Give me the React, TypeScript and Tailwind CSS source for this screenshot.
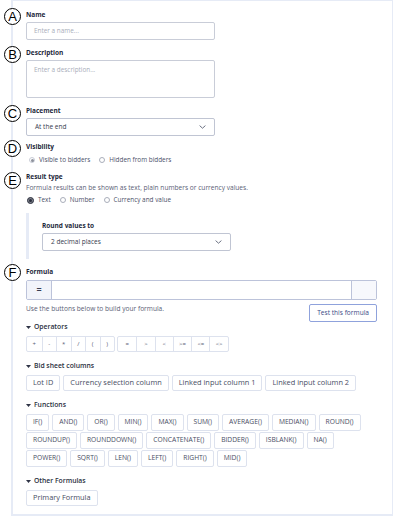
import React from 'react';

const OPS_A = ['+', '-', '*', '/', '(', ')'];
const OPS_B = ['=', '>', '<', '>=', '<=', '<>'];
const BID_COLUMNS = ['Lot ID', 'Currency selection column', 'Linked input column 1', 'Linked input column 2'];
const FUNCTIONS = [
  ['IF()', 'AND()', 'OR()', 'MIN()', 'MAX()', 'SUM()', 'AVERAGE()', 'MEDIAN()', 'ROUND()'],
  ['ROUNDUP()', 'ROUNDDOWN()', 'CONCATENATE()', 'BIDDER()', 'ISBLANK()', 'NA()'],
  ['POWER()', 'SQRT()', 'LEN()', 'LEFT()', 'RIGHT()', 'MID()'],
];

const Marker = ({ letter, top }: { letter: string; top: number }) => (
  <div
    className="absolute left-[-22px] w-[17px] h-[17px] rounded-full border border-black bg-white flex items-center justify-center text-[13px] leading-none text-black font-['Liberation_Sans',sans-serif]"
    style={{ top }}
  >
    {letter}
  </div>
);

const Label = ({ children }: { children: React.ReactNode }) => (
  <p className="text-[6.5px] leading-[8px] font-bold text-[#23283a]">{children}</p>
);

const Chevron = () => (
  <svg width="7" height="4" viewBox="0 0 7 4" className="text-[#5b6275]">
    <path d="M0.6 0.6 L3.5 3.2 L6.4 0.6" fill="none" stroke="currentColor" strokeWidth="0.9" />
  </svg>
);

const Caret = () => (
  <svg width="5" height="3" viewBox="0 0 5 3" className="mr-[3px]">
    <path d="M0 0 H5 L2.5 3 Z" fill="#2f3446" />
  </svg>
);

const Radio = ({ state, label }: { state: 'off' | 'soft' | 'on'; label: string }) => (
  <span className="flex items-center gap-[4px]">
    {state === 'on' ? (
      <span className="w-[7px] h-[7px] rounded-full border-[1.5px] border-[#2b2f3d] bg-[#7d808a] flex items-center justify-center">
        <span className="w-[3px] h-[3px] rounded-full bg-[#2b2f3d]" />
      </span>
    ) : state === 'soft' ? (
      <span className="w-[6px] h-[6px] rounded-full border border-[#c8ccd6] flex items-center justify-center">
        <span className="w-[3px] h-[3px] rounded-full bg-[#8d919c]" />
      </span>
    ) : (
      <span className="w-[6px] h-[6px] rounded-full border border-[#a9aeba]" />
    )}
    <span>{label}</span>
  </span>
);

const Heading = ({ children }: { children: React.ReactNode }) => (
  <div className="flex items-center h-[8px] text-[6.8px] font-semibold text-[#2a2f40]">
    <Caret />
    {children}
  </div>
);

const Chip = ({ children, size = 'fn' }: { children: React.ReactNode; size?: 'fn' | 'big' }) => (
  <span
    className={
      size === 'big'
        ? 'h-[16px] px-[6px] flex items-center border border-[#dde2ee] rounded-[2px] text-[7.4px] text-[#474d63]'
        : 'h-[17px] px-[6px] flex items-center border border-[#dde2ee] rounded-[2px] text-[6.7px] text-[#474d63]'
    }
  >
    {children}
  </span>
);

export default function App() {
  return (
    <div className="w-[393px] h-[517px] bg-white font-['Open_Sans',sans-serif] text-[#4a5068] overflow-hidden">
      <div className="ml-[11px] h-[516px] border-l-2 border-t border-b-2 border-r border-[#e6ebf6] pl-[13px] pt-[10px]">
        {/* Name */}
        <div className="relative">
          <Marker letter="A" top={-3} />
          <Label>Name</Label>
          <div className="mt-[3px] w-[189px] h-[18px] border border-[#c9cdd8] rounded-[2px] flex items-center px-[7px] text-[6.4px] text-[#a8adb9]">
            Enter a name...
          </div>
        </div>

        {/* Description */}
        <div className="relative mt-[9px]">
          <Marker letter="B" top={-3} />
          <Label>Description</Label>
          <div className="mt-[3px] w-[189px] h-[38px] border border-[#c9cdd8] rounded-[2px] px-[7px] pt-[4px] text-[6.4px] text-[#a8adb9]">
            Enter a description...
          </div>
        </div>

        {/* Placement */}
        <div className="relative mt-[9px]">
          <Marker letter="C" top={-2} />
          <Label>Placement</Label>
          <div className="mt-[3px] w-[189px] h-[18px] border border-[#c0c5d3] rounded-[2px] flex items-center justify-between pl-[8px] pr-[8px] text-[6.5px] text-[#363b4d]">
            <span>At the end</span>
            <Chevron />
          </div>
        </div>

        {/* Visibility */}
        <div className="relative mt-[7px]">
          <Marker letter="D" top={-3} />
          <Label>Visibility</Label>
          <div className="mt-[5px] h-[8px] flex items-center gap-[9px] pl-[3px] text-[6.4px] text-[#4a5068]">
            <Radio state="soft" label="Visible to bidders" />
            <Radio state="off" label="Hidden from bidders" />
          </div>
        </div>

        {/* Result type */}
        <div className="relative mt-[9px]">
          <Marker letter="E" top={-1} />
          <Label>Result type</Label>
          <p className="mt-[3px] h-[8px] leading-[8px] text-[6.6px] text-[#5a6076]">
            Formula results can be shown as text, plain numbers or currency values.
          </p>
          <div className="mt-[4px] h-[8px] flex items-center gap-[9px] pl-[1px] text-[6.4px] text-[#4a5068]">
            <Radio state="on" label="Text" />
            <Radio state="off" label="Number" />
            <Radio state="off" label="Currency and value" />
          </div>
          <div className="mt-[9px] border-l-[3px] border-[#e6ebf6] pl-[13px] pt-[9px] pb-[8px]">
            <Label>Round values to</Label>
            <div className="mt-[3px] w-[189px] h-[18px] border border-[#c0c5d3] rounded-[2px] flex items-center justify-between pl-[8px] pr-[8px] text-[6.5px] text-[#363b4d]">
              <span>2 decimal places</span>
              <Chevron />
            </div>
          </div>
        </div>

        {/* Formula */}
        <div className="relative mt-[9px] w-[351px]">
          <Marker letter="F" top={-4} />
          <Label>Formula</Label>
          <div className="mt-[4px] h-[20px] border border-[#bcc3da] rounded-[2px] flex">
            <div className="w-[25px] bg-[#f2f4fa] border-r border-[#bcc3da] flex items-center justify-center text-[9px] font-bold text-[#3a3f52]">
              =
            </div>
            <div className="flex-1" />
            <div className="w-[25px] bg-[#f7f8fc] border-l border-[#bcc3da]" />
          </div>
          <div className="mt-[4px] flex items-start justify-between">
            <p className="pt-[1px] text-[6.6px] leading-[8px] text-[#5a6076]">
              Use the buttons below to build your formula.
            </p>
            <span className="h-[18px] px-[7px] flex items-center border border-[#8fa2dc] rounded-[2px] text-[6.6px] text-[#3b4b86]">
              Test this formula
            </span>
          </div>

          <div className="mt-[1px]">
            <Heading>Operators</Heading>
            <div className="mt-[5px] flex gap-[2px]">
              {[OPS_A, OPS_B].map((group, gi) => (
                <div key={gi} className="flex h-[16px] border border-[#dde2ee] rounded-[2px]">
                  {group.map((op, i) => (
                    <span
                      key={op}
                      className={
                        'flex items-center justify-center text-[6px] text-[#5a6076] ' +
                        (i > 0 ? 'border-l border-[#dde2ee] ' : '') +
                        (gi === 0 ? 'w-[14.5px]' : 'w-[18.3px]')
                      }
                    >
                      {op}
                    </span>
                  ))}
                </div>
              ))}
            </div>
          </div>

          <div className="mt-[10px]">
            <Heading>Bid sheet columns</Heading>
            <div className="mt-[5px] flex gap-[3px]">
              {BID_COLUMNS.map((c) => (
                <Chip key={c} size="big">
                  {c}
                </Chip>
              ))}
            </div>
          </div>

          <div className="mt-[10px]">
            <Heading>Functions</Heading>
            <div className="mt-[5px] flex flex-col gap-[1px]">
              {FUNCTIONS.map((row, ri) => (
                <div key={ri} className="flex gap-[3px]">
                  {row.map((f) => (
                    <Chip key={f}>{f}</Chip>
                  ))}
                </div>
              ))}
            </div>
          </div>

          <div className="mt-[10px]">
            <Heading>Other Formulas</Heading>
            <div className="mt-[5px] flex">
              <Chip size="big">Primary Formula</Chip>
            </div>
          </div>
        </div>
      </div>
    </div>
  );
}
